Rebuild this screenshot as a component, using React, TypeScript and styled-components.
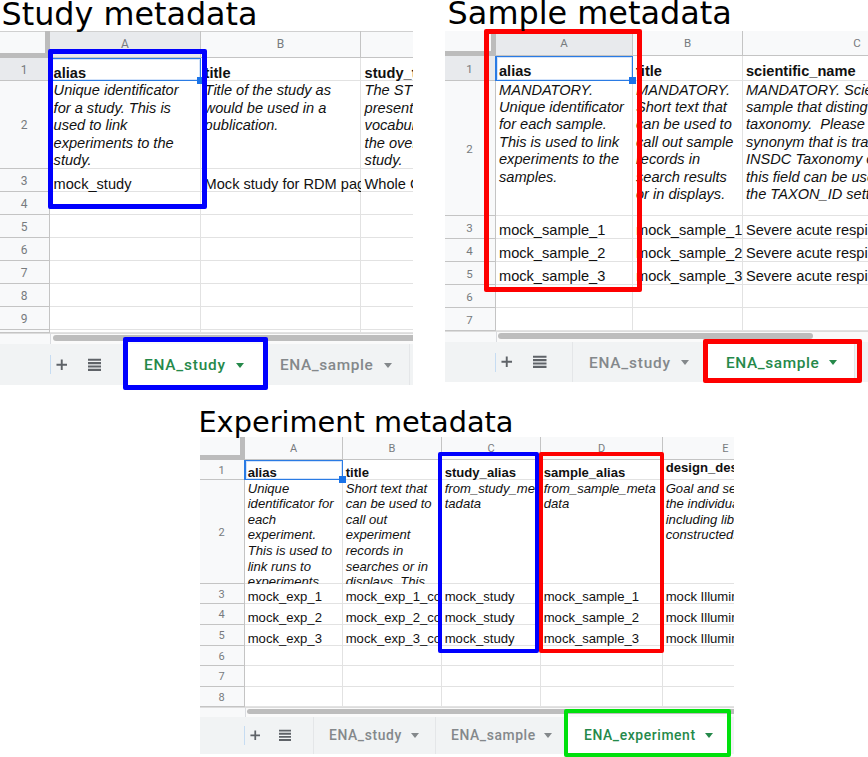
import React from "react";
import styled, { createGlobalStyle, css } from "styled-components";

const GlobalStyle = createGlobalStyle`
  html, body { margin: 0; padding: 0; background: #fff; }
  *, *::before, *::after { box-sizing: border-box; }
`;

const Page = styled.main`
  width: 868px;
  height: 757px;
  overflow: hidden;
  background: #fff;
  display: flex;
  flex-direction: column;
`;

const TopRow = styled.div`
  display: flex;
  flex: none;
  gap: 32px;
  height: 400px;
`;

const Panel = styled.section<{ $w: number; $indent?: number }>`
  position: relative;
  flex: none;
  width: ${(p) => p.$w}px;
  margin-left: ${(p) => p.$indent ?? 0}px;
`;

const Title = styled.h2<{ $size: number; $h: number; $line: number; $top: number; $left: number }>`
  position: relative;
  z-index: 3;
  margin: 0 0 0 ${(p) => p.$left}px;
  padding-top: ${(p) => p.$top}px;
  height: ${(p) => p.$h}px;
  font: 400 ${(p) => p.$size}px / ${(p) => p.$line}px "DejaVu Sans", sans-serif;
  color: #000;
  white-space: nowrap;
`;

const SheetFrame = styled.div`
  overflow: hidden;
  background: #fff;
`;

const GridRow = styled.div<{ $cols: string; $h: number }>`
  display: grid;
  grid-template-columns: ${(p) => p.$cols};
  grid-template-rows: ${(p) => p.$h}px;
  height: ${(p) => p.$h}px;
`;

const Corner = styled.div<{ $top: boolean }>`
  background: #f8f9fa;
  border-right: 5px solid #bcbcbc;
  border-bottom: 5px solid #bcbcbc;
  ${(p) => p.$top && css`box-shadow: inset 0 1px #d0d0d0;`}
`;

const ColumnHead = styled.div<{ $active?: boolean; $top: boolean; $size: number }>`
  display: flex;
  align-items: center;
  justify-content: center;
  padding: 0 1px 1px 0;
  background: ${(p) => (p.$active ? "#e8eaed" : "#f8f9fa")};
  box-shadow: inset -1px -1px #c4c4c4${(p) => (p.$top ? ", inset 0 1px #d0d0d0" : "")};
  color: #777b7e;
  font: 400 ${(p) => p.$size}px Roboto, sans-serif;
`;

const RowHead = styled.div<{ $active?: boolean; $size: number }>`
  display: flex;
  align-items: center;
  justify-content: center;
  padding: 0 2px 0 0;
  background: ${(p) => (p.$active ? "#e8eaed" : "#f8f9fa")};
  box-shadow: inset -1px -1px #c4c4c4;
  color: #777b7e;
  font: 400 ${(p) => p.$size}px Roboto, sans-serif;
`;

const Cell = styled.div<{ $pad: number; $inset: number; $kind: Kind; $selected?: boolean; $size: number; $line: number }>`
  position: relative;
  padding: ${(p) => p.$pad}px 0 0 ${(p) => p.$inset}px;
  overflow-x: ${(p) => (p.$selected ? "visible" : "clip")};
  overflow-y: ${(p) => (p.$kind === "note" ? "clip" : "visible")};
  white-space: pre;
  color: #111;
  font-family: "Liberation Sans", Arial, sans-serif;
  font-size: ${(p) => p.$size}px;
  line-height: ${(p) => p.$line}px;
  font-weight: ${(p) => (p.$kind === "head" ? 700 : 400)};
  font-style: ${(p) => (p.$kind === "note" ? "italic" : "normal")};
  box-shadow: ${(p) =>
    p.$selected
      ? "inset 0 0 0 1px #2a7be4, inset 0 0 0 2px #d3e3fa, -1px 0 #2a7be4"
      : "inset -1px -1px #e2e2e2"};
`;

const FillHandle = styled.i`
  position: absolute;
  z-index: 1;
  right: -3px;
  bottom: -3px;
  width: 7px;
  height: 7px;
  background: #1a73e8;
`;

const ScrollStrip = styled.div<{ $h: number; $top: number; $gutter: number }>`
  display: flex;
  height: ${(p) => p.$h}px;
  padding-top: ${(p) => p.$top}px;
  background: linear-gradient(to right, #f8f9fa ${(p) => p.$gutter}px, #dadce0 ${(p) => p.$gutter}px, #dadce0 ${(p) => p.$gutter + 1}px, #fafafa ${(p) => p.$gutter + 1}px);
  box-shadow: inset 0 1px #dcdcdc;
`;

const Thumb = styled.div<{ $start: number; $w: number; $h: number }>`
  margin-left: ${(p) => p.$start}px;
  width: ${(p) => p.$w}px;
  height: ${(p) => p.$h}px;
  flex: none;
  border-radius: 3px;
  background: #bdbdbd;
`;

const TabBar = styled.div<{ $h: number }>`
  display: flex;
  height: ${(p) => p.$h}px;
  background: #f1f3f4;
`;

const Tools = styled.div<{ $w: number; $start: number; $gap: number; $line: boolean; $top: number }>`
  flex: none;
  display: flex;
  align-items: center;
  gap: ${(p) => p.$gap}px;
  width: ${(p) => p.$w}px;
  padding: ${(p) => Math.max(p.$top, 0)}px 0 ${(p) => Math.max(-p.$top, 0)}px ${(p) => p.$start}px;
  ${(p) => p.$line && css`border-right: 1px solid #e4e6e8;`}
`;

const FocusMark = styled.span<{ $gap: number }>`
  width: 1px;
  height: 19px;
  margin-right: ${(p) => p.$gap}px;
  background: #c6dcf2;
`;

const TabItem = styled.div<{ $w: number; $lead: number; $active?: boolean; $line?: boolean; $top: number }>`
  flex: none;
  display: flex;
  align-items: center;
  width: ${(p) => p.$w}px;
  padding: ${(p) => Math.max(p.$top, 0)}px 0 ${(p) => Math.max(-p.$top, 0)}px ${(p) => p.$lead}px;
  color: ${(p) => (p.$active ? "#25894a" : "#84888b")};
  background: ${(p) => (p.$active ? "#fff" : "transparent")};
  ${(p) => p.$line && css`border-right: 1px solid #e4e6e8;`}
`;

const TabLabel = styled.span<{ $w: number; $size: number; $track: number }>`
  width: ${(p) => p.$w}px;
  font: 500 ${(p) => p.$size}px Roboto, sans-serif;
  letter-spacing: ${(p) => p.$track}px;
  white-space: nowrap;
`;

const Caret = styled.i<{ $gap: number }>`
  margin-left: ${(p) => p.$gap}px;
  border: 4.5px solid transparent;
  border-top: 5px solid currentColor;
  border-bottom: 0;
`;

const Highlight = styled.div<{ $x: number; $y: number; $w: number; $h: number; $b: number; $color: string }>`
  position: absolute;
  z-index: 2;
  left: ${(p) => p.$x}px;
  top: ${(p) => p.$y}px;
  width: ${(p) => p.$w}px;
  height: ${(p) => p.$h}px;
  border: ${(p) => p.$b}px solid ${(p) => p.$color};
  border-radius: 2px;
`;

type Kind = "head" | "note" | "plain";
type Row = { h: number; pad: number; kind: Kind; cells?: string[]; pads?: number[] };
type TabData = { label: string; w: number; lead: number; labelW: number; active?: boolean; line?: boolean; gap?: number; track?: number };
type SheetData = {
  gutter: number;
  cols: number[];
  headH: number;
  topLine: boolean;
  activeHead: boolean;
  size: number;
  line: number;
  small: number;
  inset: number;
  rows: Row[];
  tail: number;
  scroll: { h: number; top: number; start: number; w: number; thumb: number };
  bar: {
    h: number;
    w: number;
    mark: number;
    markGap: number;
    gap: number;
    line: boolean;
    icon: number;
    size: number;
    track: number;
    toolTop: number;
    tabTop: number;
  };
  tabs: TabData[];
};

const PlusIcon = ({ size }: { size: number }) => (
  <svg width={size} height={size} viewBox="0 0 12 12">
    <path d="M6 .5v11M.5 6h11" stroke="#5f6368" strokeWidth="2" fill="none" />
  </svg>
);

const ListIcon = ({ size }: { size: number }) => (
  <svg width={size} height={size} viewBox="0 0 14 14">
    <path d="M0 1.8h14M0 5.3h14M0 8.8h14M0 12.3h14" stroke="#5f6368" strokeWidth="2.2" fill="none" />
  </svg>
);

function Sheet({ data }: { data: SheetData }) {
  const cols = [data.gutter, ...data.cols].map((c) => `${c}px`).join(" ");
  const { scroll, bar } = data;
  return (
    <SheetFrame>
      <GridRow $cols={cols} $h={data.headH}>
        <Corner $top={data.topLine} />
        {data.cols.map((_, i) => (
          <ColumnHead key={i} $top={data.topLine} $active={data.activeHead && i === 0} $size={data.small}>
            {"ABCDE"[i]}
          </ColumnHead>
        ))}
      </GridRow>
      {data.rows.map((row, r) => (
        <GridRow key={r} $cols={cols} $h={row.h}>
          <RowHead $active={data.activeHead && r === 0} $size={data.small}>{r + 1}</RowHead>
          {data.cols.map((_, c) => (
            <Cell
              key={c}
              $pad={row.pads?.[c] ?? row.pad}
              $inset={data.inset}
              $kind={row.kind}
              $selected={r === 0 && c === 0}
              $size={data.size}
              $line={data.line}
            >
              {row.cells?.[c]}
              {r === 0 && c === 0 && <FillHandle />}
            </Cell>
          ))}
        </GridRow>
      ))}
      {data.tail > 0 && (
        <GridRow $cols={cols} $h={data.tail}>
          <RowHead $size={data.small} />
          {data.cols.map((_, c) => (
            <Cell key={c} $pad={0} $inset={0} $kind="plain" $size={data.size} $line={data.line} />
          ))}
        </GridRow>
      )}
      <ScrollStrip $h={scroll.h} $top={scroll.top} $gutter={data.gutter}>
        <Thumb $start={scroll.start} $w={scroll.w} $h={scroll.thumb} />
      </ScrollStrip>
      <TabBar $h={bar.h}>
        <Tools $w={bar.w} $start={bar.mark} $gap={bar.gap} $line={bar.line} $top={bar.toolTop}>
          <FocusMark $gap={bar.markGap - bar.gap} />
          <PlusIcon size={bar.icon - 1} />
          <ListIcon size={bar.icon + 1} />
        </Tools>
        {data.tabs.map((t) => (
          <TabItem key={t.label} $w={t.w} $lead={t.lead} $active={t.active} $line={t.line} $top={bar.tabTop}>
            <TabLabel $w={t.labelW} $size={bar.size} $track={t.track ?? bar.track}>{t.label}</TabLabel>
            <Caret $gap={t.gap ?? 9.5} />
          </TabItem>
        ))}
      </TabBar>
    </SheetFrame>
  );
}

const blank = (h: number): Row => ({ h, pad: 0, kind: "plain" });

const study: SheetData = {
  gutter: 50,
  cols: [151, 160, 160],
  headH: 27,
  topLine: true,
  activeHead: true,
  size: 14.6,
  line: 17.5,
  small: 12,
  inset: 3.6,
  rows: [
    { h: 23, pad: 7, kind: "head", cells: ["alias", "title", "study_type"] },
    {
      h: 88,
      pad: 1,
      kind: "note",
      cells: [
        "Unique identificator\nfor a study. This is\nused to link\nexperiments to the\nstudy.",
        "Title of the study as\nwould be used in a\npublication.",
        "The STUDY_TYPE\npresents a controlled\nvocabulary for\nthe overall\nstudy.",
      ],
    },
    { h: 23, pad: 6.5, kind: "plain", cells: ["mock_study", "Mock study for RDM page", "Whole Genome"] },
    blank(23), blank(23), blank(23), blank(23), blank(23), blank(23),
  ],
  tail: 3,
  scroll: { h: 11, top: 2, start: 53, w: 420, thumb: 6 },
  bar: { h: 41, w: 128, mark: 50, markGap: 4.5, gap: 20.5, line: false, icon: 12.5, size: 15.4, track: 0.6, toolTop: 0, tabTop: 1 },
  tabs: [
    { label: "ENA_study", w: 136, lead: 16, labelW: 82, active: true, track: 0.8, gap: 9.5 },
    { label: "ENA_sample", w: 146, lead: 16, labelW: 94, line: true },
  ],
};

const sample: SheetData = {
  gutter: 51,
  cols: [137, 110, 229],
  headH: 25,
  topLine: false,
  activeHead: true,
  size: 14.6,
  line: 17.45,
  small: 11.5,
  inset: 3,
  rows: [
    { h: 25, pad: 7.4, kind: "head", cells: ["alias", "title", "scientific_name"] },
    {
      h: 135,
      pad: 0.5,
      kind: "note",
      cells: [
        "MANDATORY.\nUnique identificator\nfor each sample.\nThis is used to link\nexperiments to the\nsamples.",
        "MANDATORY.\nShort text that\ncan be used to\ncall out sample\nrecords in\nsearch results\nor in displays.",
        "MANDATORY. Scientific\nsample that distinguishes\ntaxonomy.  Please\nsynonym that is tracked\nINSDC Taxonomy or\nthis field can be used\nthe TAXON_ID settings",
      ],
    },
    ...[1, 2, 3].map((n): Row => ({
      h: 23,
      pad: 6,
      kind: "plain",
      cells: [`mock_sample_${n}`, `mock_sample_${n}`, "Severe acute respiratory"],
    })),
    blank(23), blank(23),
  ],
  tail: 0,
  scroll: { h: 11, top: 2, start: 53, w: 315, thumb: 6 },
  bar: { h: 40, w: 128, mark: 50, markGap: 5, gap: 20.5, line: true, icon: 12.5, size: 15.4, track: 0.6, toolTop: 0, tabTop: 1 },
  tabs: [
    { label: "ENA_study", w: 135, lead: 16, labelW: 82, track: 0.8 },
    { label: "ENA_sample", w: 147, lead: 18, labelW: 93, active: true, line: true },
  ],
};

const experiment: SheetData = {
  gutter: 45,
  cols: [98, 99, 99, 122, 126],
  headH: 23,
  topLine: false,
  activeHead: false,
  size: 13.1,
  line: 15.65,
  small: 11,
  inset: 2.7,
  rows: [
    {
      h: 20,
      pad: 5,
      pads: [5, 5, 5, 5, 0],
      kind: "head",
      cells: ["alias", "title", "study_alias", "sample_alias", "design_description"],
    },
    {
      h: 104,
      pad: 0.5,
      kind: "note",
      cells: [
        "Unique\nidentificator for\neach\nexperiment.\nThis is used to\nlink runs to\nexperiments.",
        "Short text that\ncan be used to\ncall out\nexperiment\nrecords in\nsearches or in\ndisplays. This",
        "from_study_me\ntadata",
        "from_sample_meta\ndata",
        "Goal and setup of\nthe individual\nincluding library\nconstructed.",
      ],
    },
    ...[1, 2, 3].map((n): Row => ({
      h: n === 1 ? 20 : 21,
      pad: n === 1 ? 5 : 6,
      kind: "plain",
      cells: [`mock_exp_${n}`, `mock_exp_${n}_controls`, "mock_study", `mock_sample_${n}`, "mock Illumina"],
    })),
    blank(20), blank(21), blank(20),
  ],
  tail: 0,
  scroll: { h: 10, top: 2, start: 47, w: 500, thumb: 5 },
  bar: { h: 37, w: 114, mark: 44, markGap: 4.5, gap: 18.5, line: true, icon: 11.5, size: 13.9, track: 0.6, toolTop: -1, tabTop: -1 },
  tabs: [
    { label: "ENA_study", w: 122, lead: 15, labelW: 74, line: true, gap: 7.5 },
    { label: "ENA_sample", w: 130, lead: 15, labelW: 83, gap: 9.5 },
    { label: "ENA_experiment", w: 163, lead: 18, labelW: 113, active: true, gap: 7.5 },
  ],
};

export default function App() {
  return (
    <Page>
      <GlobalStyle />
      <TopRow>
        <Panel $w={413}>
          <Title $size={31.8} $h={31} $line={27} $top={0} $left={1.5}>Study metadata</Title>
          <Sheet data={study} />
          <Highlight $x={48} $y={49} $w={159} $h={160} $b={5} $color="#0000fe" />
          <Highlight $x={123} $y={337} $w={145} $h={53} $b={5} $color="#0000fe" />
        </Panel>
        <Panel $w={423}>
          <Title $size={31.9} $h={31} $line={27} $top={0} $left={2.6}>Sample metadata</Title>
          <Sheet data={sample} />
          <Highlight $x={39} $y={29} $w={158} $h={263} $b={5} $color="#fe0000" />
          <Highlight $x={258} $y={339} $w={159} $h={44} $b={5} $color="#fe0000" />
        </Panel>
      </TopRow>
      <Panel $w={534} $indent={200}>
        <Title $size={28.8} $h={37} $line={36} $top={4} $left={-1.6}>Experiment metadata</Title>
        <Sheet data={experiment} />
        <Highlight $x={238} $y={52} $w={101} $h={201} $b={4} $color="#0000fe" />
        <Highlight $x={339} $y={52} $w={125} $h={201} $b={4} $color="#fe0000" />
        <Highlight $x={364} $y={309} $w={167} $h={48} $b={4} $color="#00e00c" />
      </Panel>
    </Page>
  );
}
